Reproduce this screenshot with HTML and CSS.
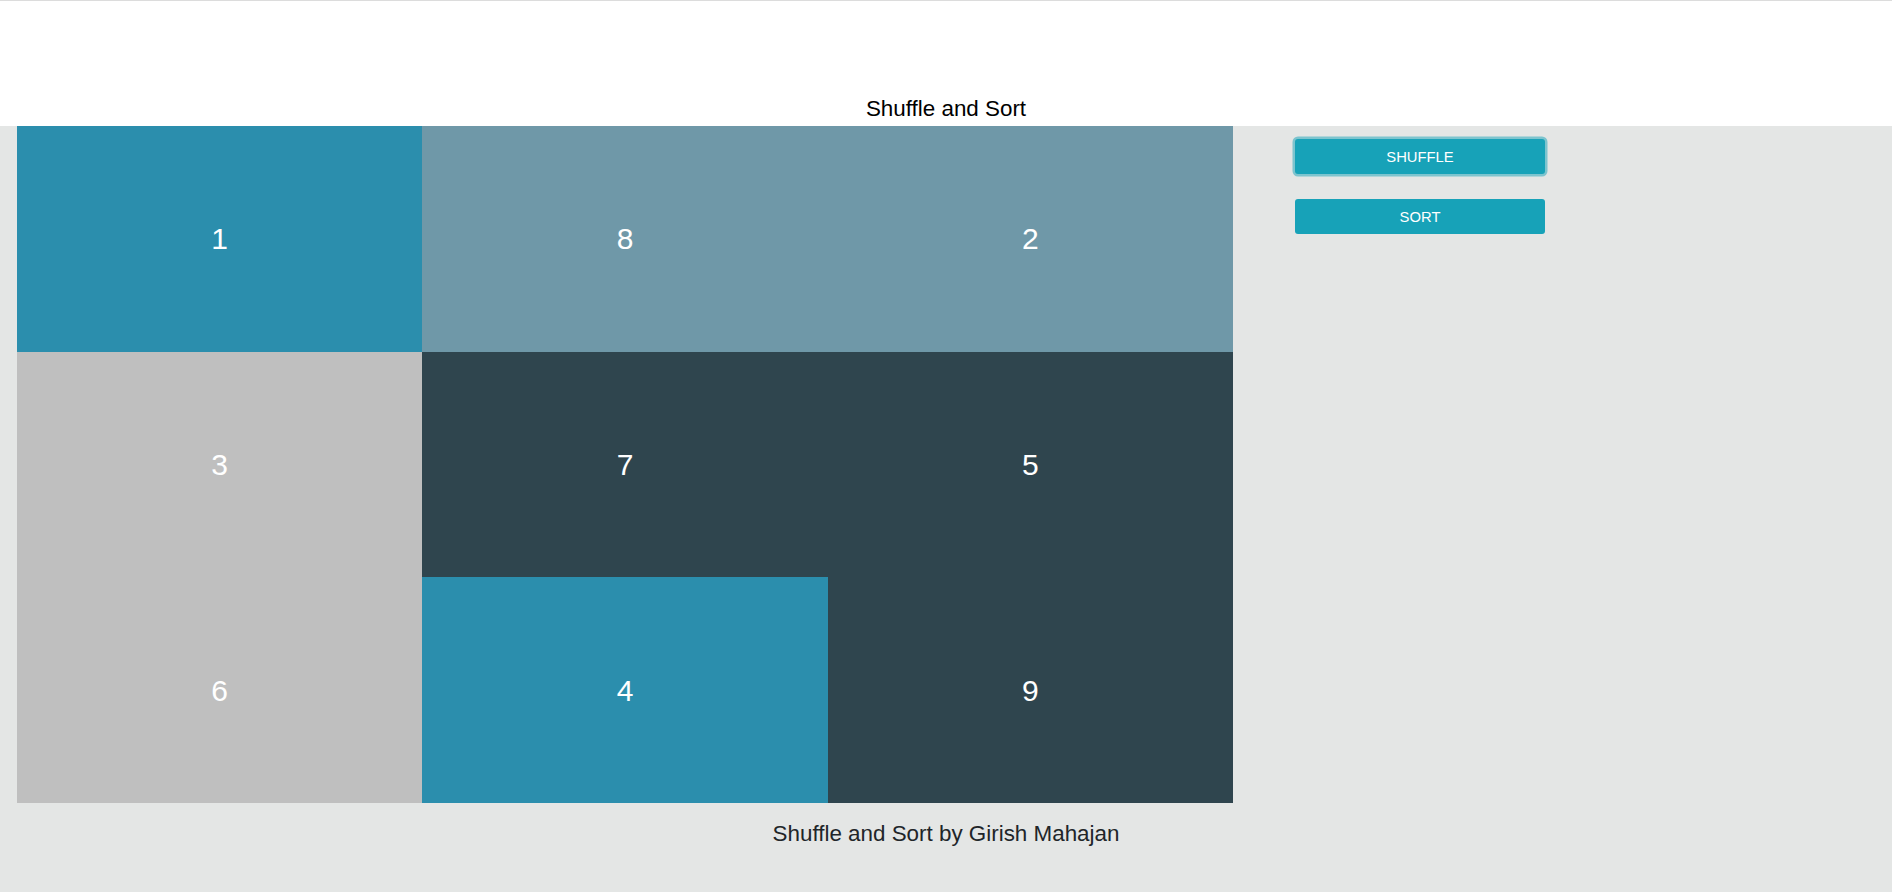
FILE: index.html
```html
<!DOCTYPE html>
<html lang="en">
<head>
<meta charset="utf-8">
<title>Shuffle and Sort</title>
<link rel="stylesheet" href="styles.css">
</head>
<body>
<header class="header">
  <h1 class="title">Shuffle and Sort</h1>
</header>
<main class="main">
  <div class="board">
    <div class="cell c-blue">1</div>
    <div class="cell c-slate">8</div>
    <div class="cell c-slate">2</div>
    <div class="cell c-gray">3</div>
    <div class="cell c-dark">7</div>
    <div class="cell c-dark">5</div>
    <div class="cell c-gray">6</div>
    <div class="cell c-blue">4</div>
    <div class="cell c-dark">9</div>
  </div>
  <div class="controls">
    <button class="btn btn-focus" type="button">SHUFFLE</button>
    <button class="btn" type="button">SORT</button>
  </div>
</main>
<footer class="footer">Shuffle and Sort by Girish Mahajan</footer>
</body>
</html>
```
FILE: styles.css
```css
html, body {
  margin: 0;
  padding: 0;
}
body {
  background: #e4e6e5;
  font-family: "Liberation Sans", Arial, sans-serif;
  height: 892px;
  overflow: hidden;
}
.header {
  background: #ffffff;
  border-top: 1px solid #dcdcdc;
  height: 125px;
  display: flex;
  align-items: flex-end;
  justify-content: center;
}
.title {
  margin: 0 0 4px 0;
  font-size: 22.4px;
  font-weight: normal;
  color: #000000;
  line-height: normal;
}
.main {
  display: flex;
  align-items: flex-start;
  padding-left: 17px;
}
.board {
  width: 1216px;
  height: 677px;
  display: grid;
  grid-template-columns: repeat(3, 1fr);
  grid-template-rows: repeat(3, 1fr);
}
.cell {
  display: flex;
  align-items: center;
  justify-content: center;
  color: #ffffff;
  font-size: 30px;
  padding-top: 1px;
}
.c-blue { background: #2b8ead; }
.c-slate { background: #6f98a8; }
.c-gray { background: #bfbfbf; }
.c-dark { background: #2f454e; }
.controls {
  margin-left: 62px;
  padding-top: 13px;
  display: flex;
  flex-direction: column;
  gap: 25px;
}
.btn {
  width: 250px;
  height: 35px;
  border: none;
  border-radius: 3px;
  background: #17a2b8;
  color: #ffffff;
  font-family: "Liberation Sans", Arial, sans-serif;
  font-size: 14.8px;
  padding: 0;
  cursor: pointer;
}
.btn-focus {
  box-shadow: 0 0 0 2.5px #7dc4ce;
}
.footer {
  margin-top: 18px;
  text-align: center;
  font-size: 22.4px;
  color: #212529;
  line-height: normal;
}
```
